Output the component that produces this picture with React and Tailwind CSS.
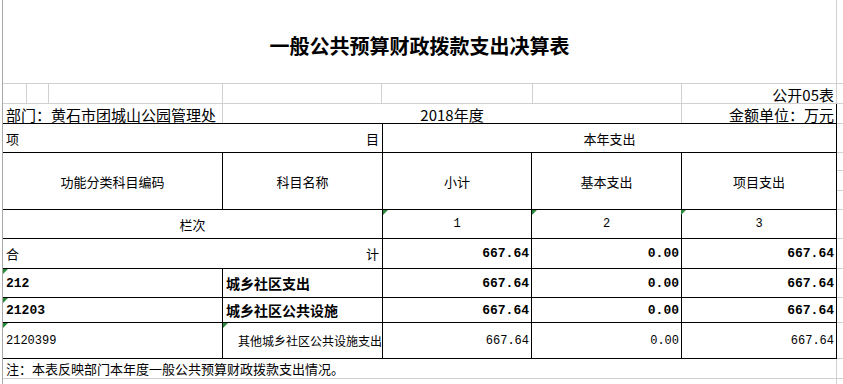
import React from "react";

const CJK = "font-['Noto_Sans_CJK_SC',sans-serif]";
const MONO = "font-['Liberation_Mono','Noto_Sans_CJK_SC',monospace]";

function Tri() {
  return (
    <div className="absolute left-0 top-0 w-0 h-0 border-t-[5px] border-t-[#2a8a3a] border-r-[5px] border-r-transparent" />
  );
}

function Cell({ className = "", children, tri = false }) {
  return (
    <div className={`relative flex items-center border-r border-b border-black leading-none text-black ${className}`}>
      {tri && <Tri />}
      {children}
    </div>
  );
}

const rows = [
  { code: "212", name: "城乡社区支出", v: ["667.64", "0.00", "667.64"], bold: true },
  { code: "21203", name: "城乡社区公共设施", v: ["667.64", "0.00", "667.64"], bold: true },
];

export default function App() {
  return (
    <div className={`w-[843px] h-[384px] overflow-hidden bg-white flex ${CJK}`}>
      <div className="w-[2px] shrink-0" />
      <div className="w-[835px] shrink-0 border-l border-[#a8a8a8] flex flex-col">
        {/* title */}
        <div className="h-[84px] shrink-0 border-b border-r border-[#d0d0d0] flex items-center justify-center pt-[8px]">
          <h1 className="text-[20px] font-bold text-black leading-none">一般公共预算财政拨款支出决算表</h1>
        </div>
        {/* 公开05表 row */}
        <div className="h-[20px] shrink-0 grid grid-cols-[24px_22px_174px_159px_151px_149px_155px] border-b border-[#d0d0d0]">
          <div className="border-r border-[#d0d0d0]" />
          <div className="border-r border-[#d0d0d0]" />
          <div className="border-r border-[#d0d0d0]" />
          <div className="border-r border-[#d0d0d0]" />
          <div className="border-r border-[#d0d0d0]" />
          <div className="border-r border-[#d0d0d0]" />
          <div className="border-r border-[#d0d0d0] flex items-end justify-end pr-[2px] pb-[1px] text-[15px] leading-none text-black">公开05表</div>
        </div>
        {/* 部门 row */}
        <div className="h-[20px] shrink-0 grid grid-cols-[220px_459px_155px] border-b border-black text-[15px] leading-none text-black">
          <div className="border-r border-[#d0d0d0] flex items-end pl-[3px] pb-[1px] whitespace-nowrap">部门：黄石市团城山公园管理处</div>
          <div className="border-r border-[#d0d0d0] flex items-end justify-center pb-[1px]">2018年度</div>
          <div className="border-r border-black flex items-end justify-end pr-[2px] pb-[1px] whitespace-nowrap">金额单位：万元</div>
        </div>
        {/* table */}
        <div className="shrink-0 grid grid-cols-[220px_160px_149px_150px_155px] grid-rows-[29px_57px_29px_30px_29px_25px_36px] text-[13px]">
          <Cell className="col-span-2 justify-between px-[3px]">
            <span>项</span>
            <span>目</span>
          </Cell>
          <Cell className="col-span-3 justify-center">本年支出</Cell>

          <Cell className="justify-center">功能分类科目编码</Cell>
          <Cell className="justify-center">科目名称</Cell>
          <Cell className="justify-center">小计</Cell>
          <Cell className="justify-center">基本支出</Cell>
          <Cell className="justify-center">项目支出</Cell>

          <Cell className="col-span-2 justify-center">栏次</Cell>
          <Cell tri className={`justify-center text-[12px] ${MONO}`}>1</Cell>
          <Cell tri className={`justify-center text-[12px] ${MONO}`}>2</Cell>
          <Cell className={`justify-center text-[12px] ${MONO}`}>
            <div className="absolute left-[-1px] top-0 w-0 h-0 border-t-[5px] border-t-[#2a8a3a] border-r-[5px] border-r-transparent" />
            3
          </Cell>

          <Cell className="col-span-2 justify-between px-[3px]">
            <span>合</span>
            <span>计</span>
          </Cell>
          <Cell className={`justify-end pr-[2px] font-bold ${MONO}`}>667.64</Cell>
          <Cell className={`justify-end pr-[2px] font-bold ${MONO}`}>0.00</Cell>
          <Cell className={`justify-end pr-[2px] font-bold ${MONO}`}>667.64</Cell>

          {rows.map((r) => (
            <React.Fragment key={r.code}>
              <Cell tri className={`pl-[3px] font-bold ${MONO}`}>{r.code}</Cell>
              <Cell className="pl-[3px] font-bold text-[14px]">{r.name}</Cell>
              {r.v.map((x, i) => (
                <Cell key={i} className={`justify-end pr-[2px] font-bold ${MONO}`}>{x}</Cell>
              ))}
            </React.Fragment>
          ))}

          <Cell tri className={`pl-[3px] text-[12px] ${MONO}`}>2120399</Cell>
          <Cell tri className="justify-end text-[12px] whitespace-nowrap">其他城乡社区公共设施支出</Cell>
          <Cell className={`justify-end pr-[2px] text-[12px] ${MONO}`}>667.64</Cell>
          <Cell className={`justify-end pr-[2px] text-[12px] ${MONO}`}>0.00</Cell>
          <Cell className={`justify-end pr-[2px] text-[12px] ${MONO}`}>667.64</Cell>
        </div>
        {/* note */}
        <div className="h-[20px] shrink-0 border-b border-r border-[#d0d0d0] flex items-center pl-[3px] text-[13px] leading-none text-black whitespace-nowrap">
          注：本表反映部门本年度一般公共预算财政拨款支出情况。
        </div>
        <div className="flex-1 border-r border-[#d0d0d0]" />
      </div>
      {/* right gutter gridlines */}
      <div className="w-[6px] shrink-0 flex flex-col">
        <div className="h-[84px] border-b border-[#d0d0d0]" />
        <div className="h-[20px] border-b border-[#d0d0d0]" />
        <div className="h-[20px] border-b border-[#d0d0d0]" />
        <div className="h-[29px] border-b border-[#d0d0d0]" />
        <div className="h-[18px] border-b border-[#d0d0d0]" />
        <div className="h-[20px] border-b border-[#d0d0d0]" />
        <div className="h-[19px] border-b border-[#d0d0d0]" />
        <div className="h-[29px] border-b border-[#d0d0d0]" />
        <div className="h-[30px] border-b border-[#d0d0d0]" />
        <div className="h-[29px] border-b border-[#d0d0d0]" />
        <div className="h-[25px] border-b border-[#d0d0d0]" />
        <div className="h-[36px] border-b border-[#d0d0d0]" />
        <div className="h-[20px] border-b border-[#d0d0d0]" />
      </div>
    </div>
  );
}
